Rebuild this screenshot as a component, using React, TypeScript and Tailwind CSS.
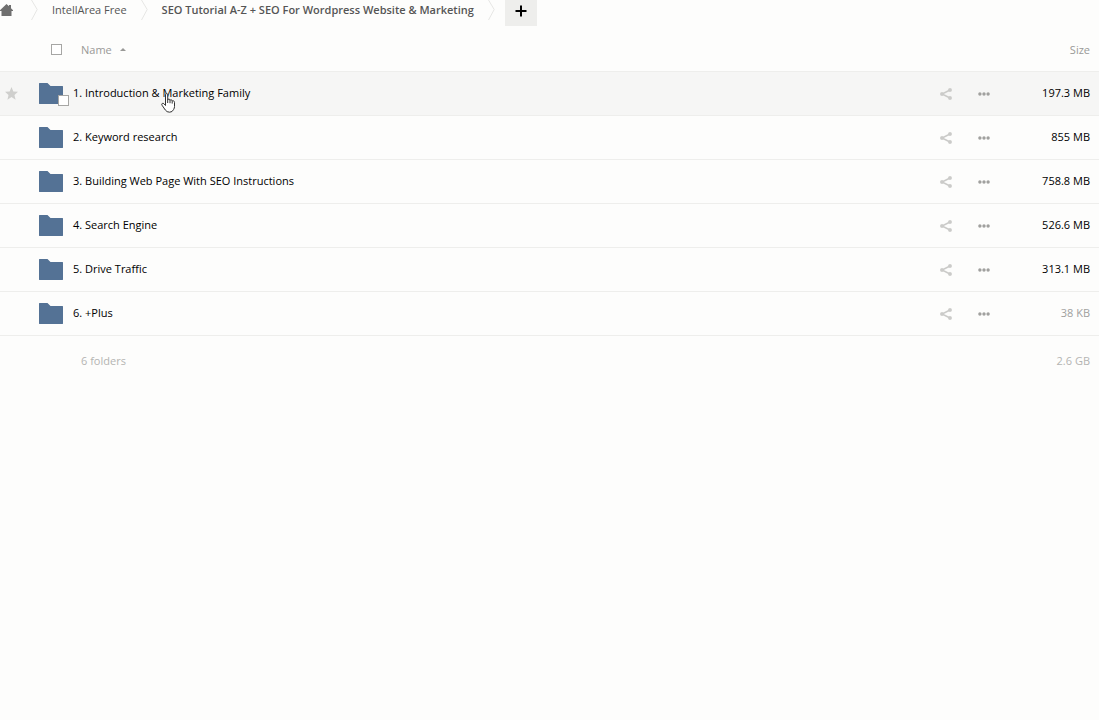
import { Fragment } from "react";

interface FolderRow {
  name: string;
  size: string;
  muted?: boolean;
  hovered?: boolean;
}

const folders: FolderRow[] = [
  { name: "1. Introduction & Marketing Family", size: "197.3 MB", hovered: true },
  { name: "2. Keyword research", size: "855 MB" },
  { name: "3. Building Web Page With SEO Instructions", size: "758.8 MB" },
  { name: "4. Search Engine", size: "526.6 MB" },
  { name: "5. Drive Traffic", size: "313.1 MB" },
  { name: "6. +Plus", size: "38 KB", muted: true },
];

const crumbs = [
  { label: "IntellArea Free", current: false },
  { label: "SEO Tutorial A-Z + SEO For Wordpress Website & Marketing", current: true },
];

const HomeIcon = () => (
  <svg className="h-3 w-[13px]" viewBox="0 0 13 12" fill="#6f6f6f">
    <path d="M6.5 0 L9 2.3 V1 H11 V4.2 L13 6.2 V7 H11.5 V12 H1.5 V7 H0 V6.2 Z" />
  </svg>
);

const Separator = () => (
  <svg className="mx-3.5 h-5 w-[7px]" viewBox="0 0 7 20" fill="none" stroke="#e6e6e4">
    <path d="M0.5 0 L6.2 9.5 L0.5 20" />
  </svg>
);

const StarIcon = () => (
  <svg className="h-[13px] w-[13px]" viewBox="0 0 14 14" fill="#cfcfcd">
    <path d="M7 0 L9 4.8 L14 5.2 L10.2 8.5 L11.4 13.7 L7 10.9 L2.6 13.7 L3.8 8.5 L0 5.2 L5 4.8 Z" />
  </svg>
);

const FolderIcon = () => (
  <svg className="h-[21px] w-6" viewBox="0 0 24 21" fill="#547295">
    <path d="M0.4 0 H8.5 L11.5 3 H23.6 Q24 3 24 3.4 V20.6 Q24 21 23.6 21 H0.4 Q0 21 0 20.6 V0.4 Q0 0 0.4 0 Z" />
  </svg>
);

const ShareIcon = () => (
  <svg className="h-3 w-3" viewBox="0 0 12 12" fill="#cbcbc9" stroke="#cbcbc9">
    <path d="M10 2 L2 6 L10 10" fill="none" strokeWidth="1.5" />
    <circle cx="10" cy="2" r="1.7" strokeWidth="0.5" />
    <circle cx="2" cy="6" r="1.7" strokeWidth="0.5" />
    <circle cx="10" cy="10" r="1.7" strokeWidth="0.5" />
  </svg>
);

const MoreIcon = () => (
  <svg className="h-1 w-3" viewBox="0 0 12 4" fill="#a0a09e">
    <circle cx="1.9" cy="2" r="1.7" />
    <circle cx="6" cy="2" r="1.7" />
    <circle cx="10.1" cy="2" r="1.7" />
  </svg>
);

const HandCursor = () => (
  <svg
    className="pointer-events-none absolute top-2.5 left-[88px] h-5 w-[15px]"
    viewBox="0 0 15 20"
    fill="#ffffff"
    stroke="#333333"
    strokeLinejoin="round"
  >
    <path d="M4.5 12.5 V1.8 Q4.5 0.6 5.6 0.6 Q6.7 0.6 6.7 1.8 V7 Q6.9 6 7.9 6.1 Q9 6.2 9 7.4 Q9.3 6.6 10.2 6.8 Q11.2 7 11.2 8.2 Q11.6 7.5 12.4 7.8 Q13.5 8.2 13.5 9.4 V13.5 Q13.5 15 12.6 16.5 Q11.4 19.2 8.6 19.2 Q5.8 19.2 4.3 17 L1 12.2 Q0.3 11 1.3 10.4 Q2.2 10 3.1 10.9 Z" />
    <path d="M6.7 7 V10 M9 7.4 V10.2 M11.2 8.2 V10.6" fill="none" />
  </svg>
);

const checkbox = "block h-[11px] w-[11px] appearance-none border border-[#a6a6a4] bg-white";

const App = () => {
  return (
    <div className="min-h-screen bg-[#fdfdfc] font-['Open_Sans',sans-serif] text-[11px] leading-5 text-black">
      <nav aria-label="Breadcrumb" className="flex h-[27px] items-start text-[#555555]">
        <a href="#" aria-label="Home" className="mr-1 flex h-5 items-center">
          <HomeIcon />
        </a>
        <Separator />
        {crumbs.map((crumb) => (
          <Fragment key={crumb.label}>
            <a href="#" className={crumb.current ? "font-semibold" : ""}>
              {crumb.label}
            </a>
            <Separator />
          </Fragment>
        ))}
        <button
          type="button"
          aria-label="New"
          className="-ml-1 flex h-[26px] w-8 items-center justify-center bg-[#eeeeec] pb-1"
        >
          <svg className="h-3 w-3" viewBox="0 0 12 12" stroke="#000000" strokeWidth="2">
            <path d="M6 0.5 V11.5 M0.5 6 H11.5" />
          </svg>
        </button>
      </nav>

      <table className="w-full table-fixed border-collapse">
        <colgroup>
          <col className="w-[39px]" />
          <col className="w-[34px]" />
          <col />
          <col className="w-[38px]" />
          <col className="w-[38px]" />
          <col className="w-24" />
        </colgroup>
        <thead>
          <tr className="h-11 border-b border-[#eeeeec] text-[#999997]">
            <td></td>
            <th className="pt-0.5 pl-3">
              <input type="checkbox" aria-label="Select all" className={checkbox} />
            </th>
            <th className="pt-0.5 pl-2 text-left font-normal">
              <button type="button" className="flex items-center gap-2">
                Name
                <svg className="h-[3px] w-1.5" viewBox="0 0 6 3" fill="#999997">
                  <path d="M3 0 L6 3 H0 Z" />
                </svg>
              </button>
            </th>
            <td></td>
            <td></td>
            <th className="pt-0.5 pr-[9px] text-right font-normal">Size</th>
          </tr>
        </thead>
        <tbody>
          {folders.map((folder) => (
            <tr
              key={folder.name}
              className={`h-11 border-b border-[#eeeeec] ${folder.hovered ? "bg-[#f6f6f5]" : ""}`}
            >
              <td className="pl-[5px]">
                {folder.hovered && (
                  <button type="button" aria-label="Favorite" className="block">
                    <StarIcon />
                  </button>
                )}
              </td>
              <td>
                <div className="relative flex">
                  <FolderIcon />
                  {folder.hovered && (
                    <input
                      type="checkbox"
                      aria-label={`Select ${folder.name}`}
                      className={`absolute top-3 left-[19px] ${checkbox}`}
                    />
                  )}
                </div>
              </td>
              <td>
                <div className="relative">
                  <a href="#">{folder.name}</a>
                  {folder.hovered && <HandCursor />}
                </div>
              </td>
              <td className="pt-0.5">
                <button type="button" aria-label="Share" className="mx-auto block">
                  <ShareIcon />
                </button>
              </td>
              <td className="pt-0.5">
                <button type="button" aria-label="More actions" className="mx-auto block">
                  <MoreIcon />
                </button>
              </td>
              <td className={`pr-[9px] text-right ${folder.muted ? "text-[#a0a09e]" : ""}`}>
                {folder.size}
              </td>
            </tr>
          ))}
        </tbody>
        <tfoot>
          <tr className="h-[52px] text-[#b4b4b2]">
            <td></td>
            <td></td>
            <td className="pl-2">6 folders</td>
            <td></td>
            <td></td>
            <td className="pr-[9px] text-right">2.6 GB</td>
          </tr>
        </tfoot>
      </table>
    </div>
  );
};

export default App;
